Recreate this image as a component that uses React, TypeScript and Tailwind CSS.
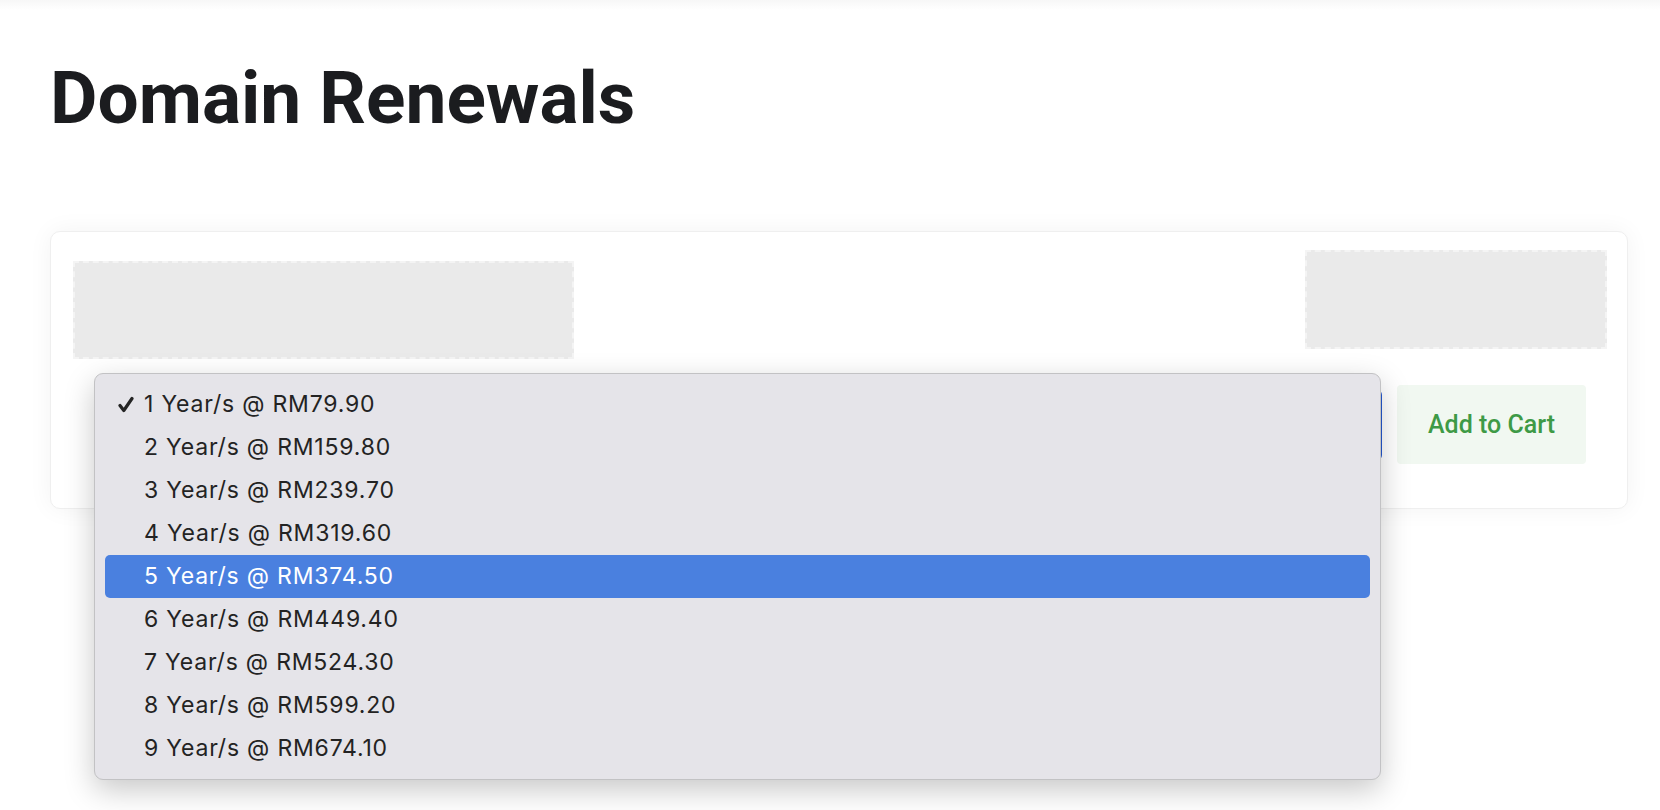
const options = [
  { label: '1 Year/s @ RM79.90', checked: true },
  { label: '2 Year/s @ RM159.80' },
  { label: '3 Year/s @ RM239.70' },
  { label: '4 Year/s @ RM319.60' },
  { label: '5 Year/s @ RM374.50', active: true },
  { label: '6 Year/s @ RM449.40' },
  { label: '7 Year/s @ RM524.30' },
  { label: '8 Year/s @ RM599.20' },
  { label: '9 Year/s @ RM674.10' },
];

const Placeholder = ({ className }: { className: string }) => (
  <div className={`bg-[#eaeaea] border-2 border-dashed border-[#f4f4f4] ${className}`} />
);

const CheckMark = () => (
  <svg width="16" height="17" viewBox="0 0 16 17" className="text-[#242424]">
    <path d="M2 9.5 L5.8 14.5 L14 2.5" fill="none" stroke="currentColor" strokeWidth="3.2" strokeLinecap="round" strokeLinejoin="round" />
  </svg>
);

export default function App() {
  return (
    <div className="min-h-[810px] bg-white font-['Roboto',sans-serif]">
      <div className="h-[10px] bg-gradient-to-b from-[#f7f7f7] to-white" />
      <div className="px-[50px]">
        <h1 className="mt-[52px] text-[73px] font-bold leading-none text-[#1b1c1f]">Domain Renewals</h1>

        <div className="mt-[96px] w-[1578px] rounded-[10px] border border-[#efefef] bg-white pl-[22px] pr-[20px] pt-[18px] pb-[44px] shadow-[0_0_24px_rgba(0,0,0,0.05)]">
          <div className="flex items-start justify-between">
            <Placeholder className="mt-[11px] w-[501px] h-[98px]" />
            <Placeholder className="w-[302px] h-[99px]" />
          </div>

          <div className="mt-[26px] flex items-center gap-[15px]">
            <div className="relative ml-[22px] h-[72px] w-[1287px]">
              <div className="h-full w-full rounded-[6px] border border-[#2357cf] bg-white" />

              <div className="absolute left-[-1px] top-[-16px] w-[1287px] rounded-[9px] border border-[#c2c2c4] bg-[#e5e4e9] px-[10px] py-[9px] shadow-[0_10px_30px_rgba(0,0,0,0.22)] font-['Inter','Noto_Sans',sans-serif] text-[23px] text-[#232323]">
                {options.map((o) => (
                  <div
                    key={o.label}
                    className={`flex h-[43px] items-center rounded-[5px] ${o.active ? 'bg-[#4a80df] text-white' : ''}`}
                  >
                    <span className="flex w-[39px] justify-end pr-[10px]">{o.checked && <CheckMark />}</span>
                    <span className="tracking-[0.8px]">{o.label}</span>
                  </div>
                ))}
              </div>
            </div>

            <button className="h-[79px] w-[189px] rounded-[4px] bg-[#f1f8f1] text-[25px] font-medium text-[#3e9a46]">
              Add to Cart
            </button>
          </div>
        </div>
      </div>
    </div>
  );
}
